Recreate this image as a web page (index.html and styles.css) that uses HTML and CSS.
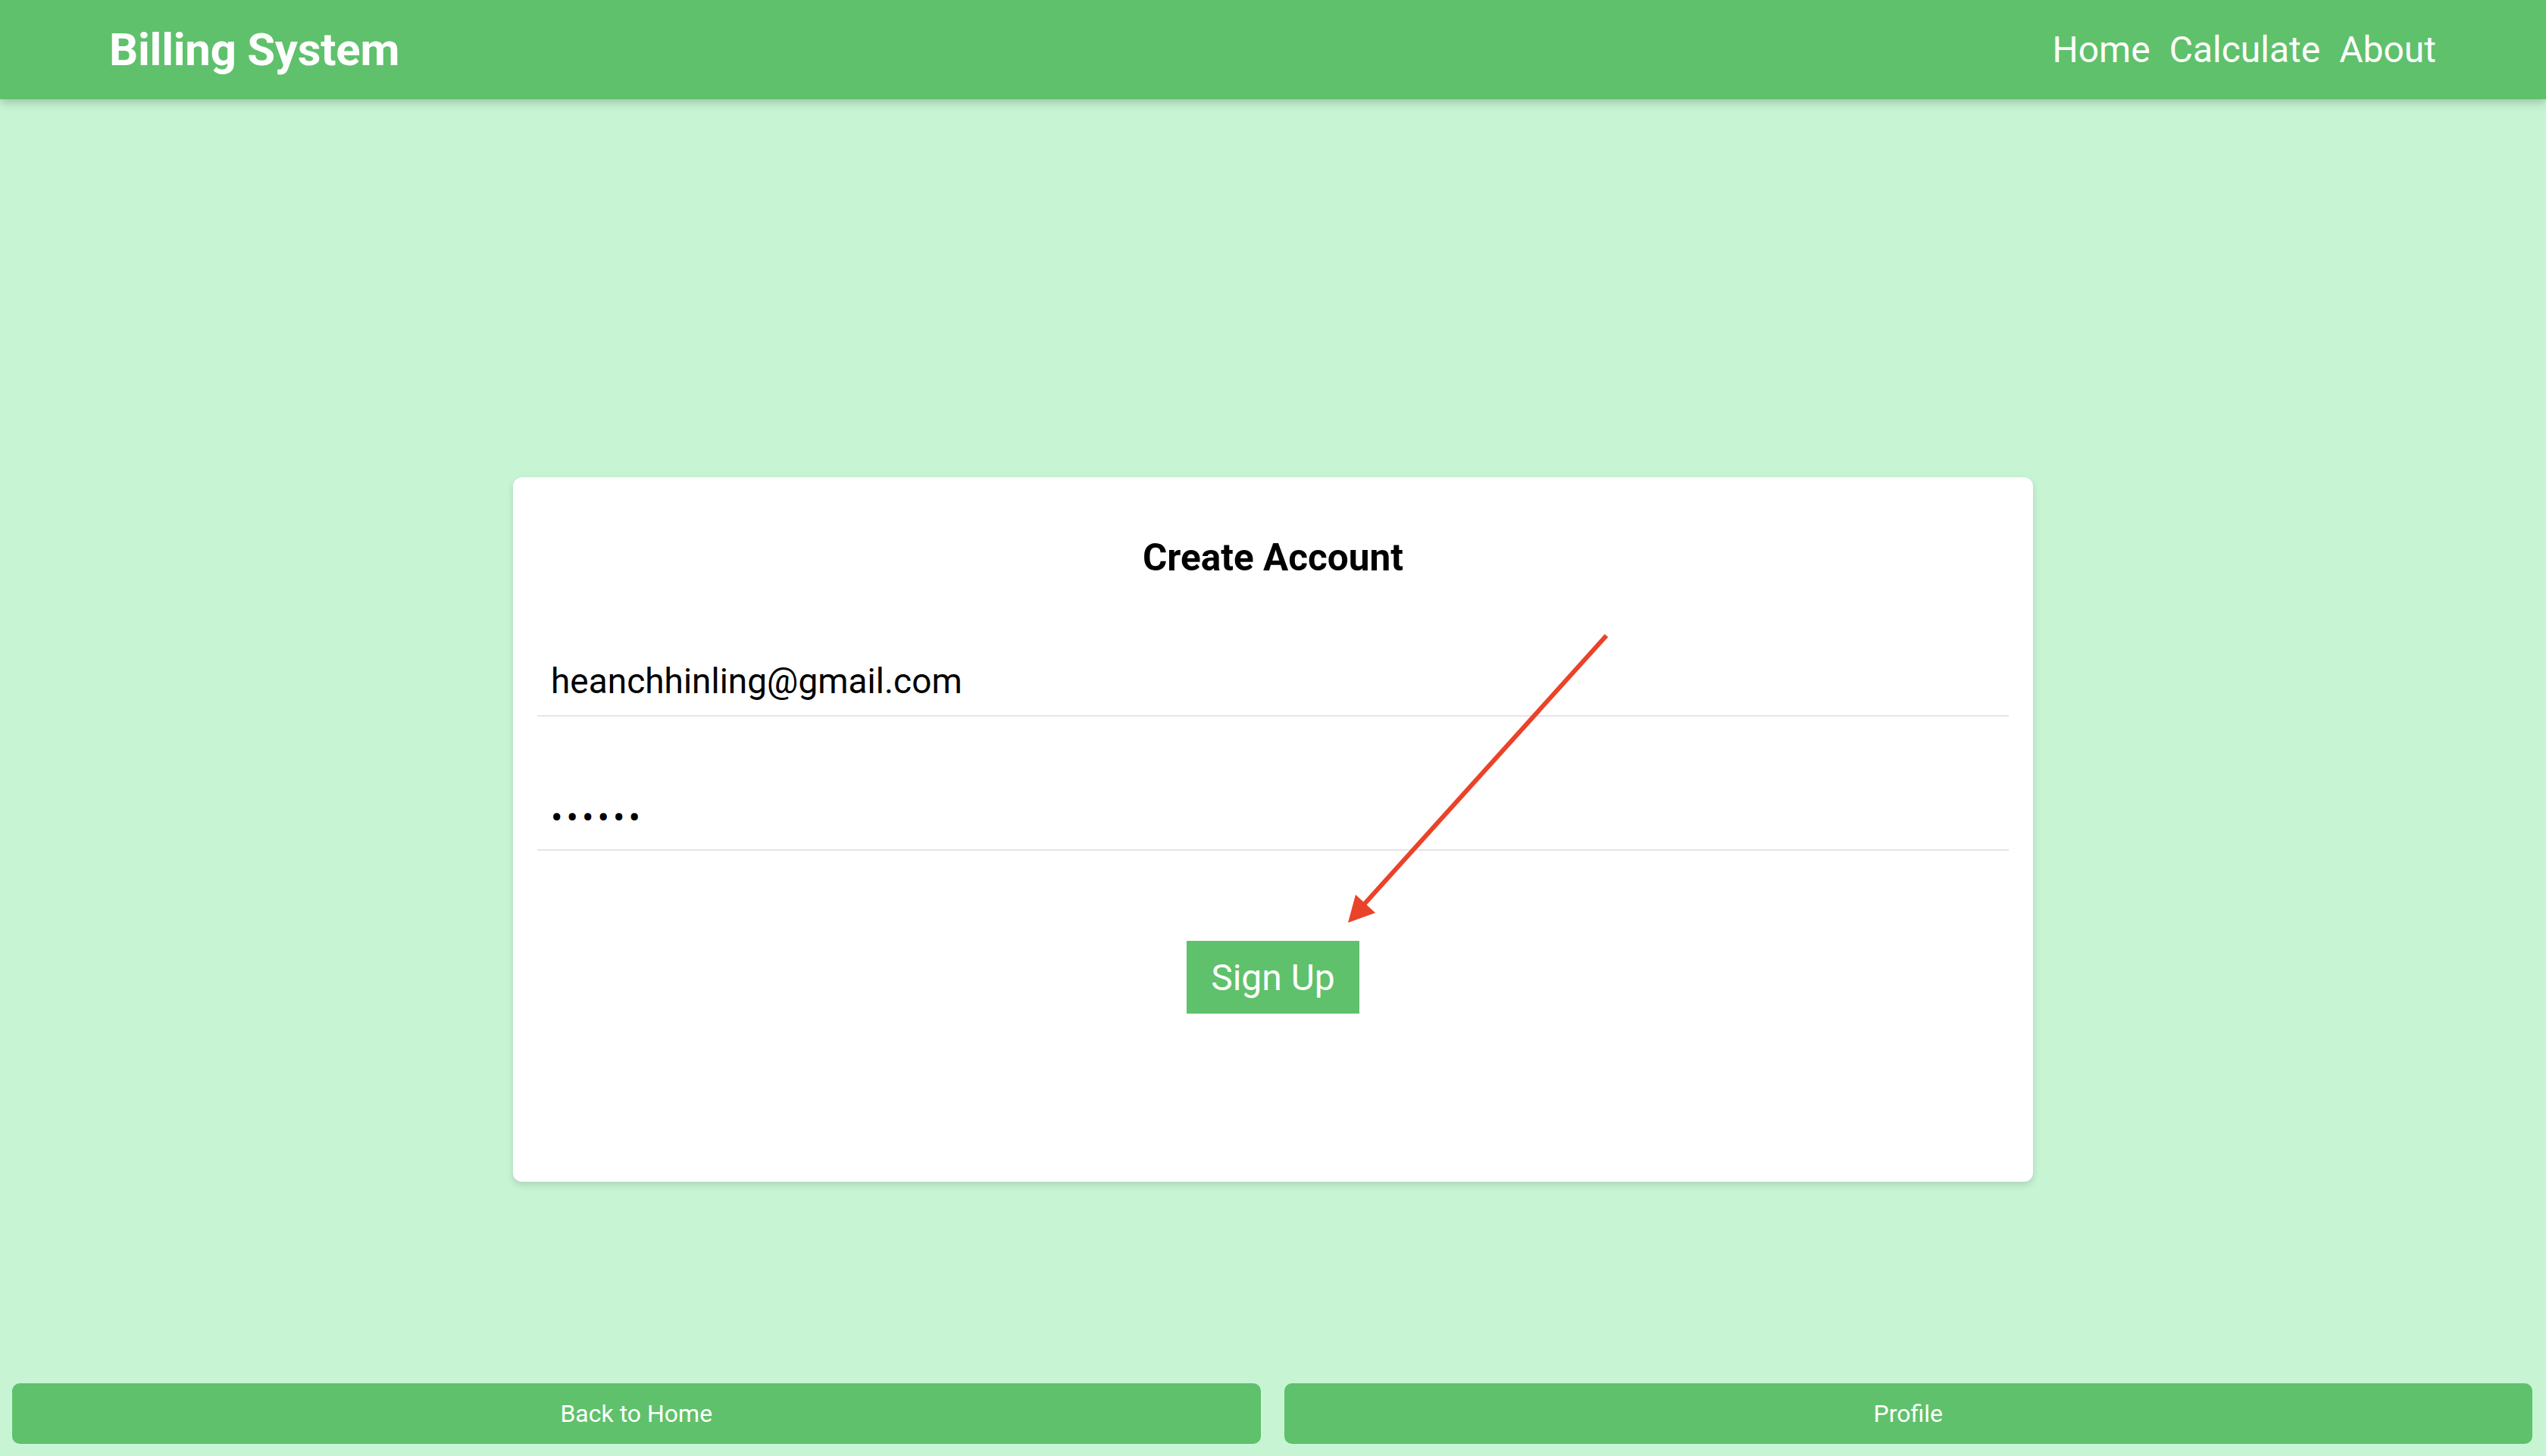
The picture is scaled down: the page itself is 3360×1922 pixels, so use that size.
FILE: index.html
```html
<!DOCTYPE html>
<html lang="en">
<head>
<meta charset="utf-8">
<title>Billing System</title>
<link rel="stylesheet" href="styles.css">
</head>
<body>
  <header class="topbar">
    <div class="brand">Billing System</div>
    <nav class="nav">
      <a class="nav-link" href="#">Home</a>
      <a class="nav-link" href="#">Calculate</a>
      <a class="nav-link" href="#">About</a>
    </nav>
  </header>

  <main class="main">
    <form class="card">
      <h2 class="card-title">Create Account</h2>
      <input class="field field-email" type="email" value="heanchhinling@gmail.com">
      <input class="field field-pass" type="password" value="123456">
      <button class="signup" type="button">Sign Up</button>
    </form>
  </main>

  <footer class="footer">
    <button class="foot-btn" type="button">Back to Home</button>
    <button class="foot-btn" type="button">Profile</button>
  </footer>

  <svg class="annotation" viewBox="0 0 3360 1922" width="3360" height="1922" aria-hidden="true">
    <line x1="2120" y1="839" x2="1800" y2="1194" stroke="#e9432a" stroke-width="6"/>
    <polygon points="1779,1218 1789,1181 1815,1205" fill="#e9432a"/>
  </svg>
</body>
</html>
```

FILE: styles.css
```css
* { box-sizing: border-box; }

html, body {
  margin: 0;
  padding: 0;
}

body {
  position: relative;
  min-height: 100vh;
  display: flex;
  flex-direction: column;
  background: #c7f5d4;
  font-family: Roboto, "Liberation Sans", Arial, sans-serif;
  color: #000;
}

.topbar {
  height: 131px;
  flex: 0 0 auto;
  display: flex;
  align-items: center;
  justify-content: space-between;
  padding: 0 145px 0 144px;
  background: #5fc16b;
  box-shadow: 0 4px 12px rgba(0, 0, 0, 0.22);
  position: relative;
  z-index: 1;
}

.brand {
  color: #fff;
  font-size: 60px;
  font-weight: 700;
  line-height: 1;
  letter-spacing: -0.3px;
}

.nav {
  display: flex;
  gap: 25px;
}

.nav-link {
  color: #fff;
  text-decoration: none;
  font-size: 48px;
  line-height: 1;
}

.main {
  flex: 1 1 auto;
  display: flex;
  justify-content: center;
  align-items: flex-start;
  padding-top: 499px;
}

.card {
  width: 2006px;
  height: 930px;
  padding: 78px 32px 0;
  background: #fff;
  border-radius: 12px;
  box-shadow: 0 4px 10px rgba(0, 0, 0, 0.14);
  display: flex;
  flex-direction: column;
  align-items: center;
}

.card-title {
  margin: 0 0 103px;
  font-size: 49.5px;
  line-height: 56px;
  font-weight: 700;
}

.field {
  display: block;
  width: 100%;
  height: 79px;
  padding: 0 18px 14px;
  border: none;
  border-bottom: 2px solid #e5e5ea;
  background: transparent;
  font-family: Roboto, "Liberation Sans", Arial, sans-serif;
  font-size: 46px;
  color: #000;
  outline: none;
}

.field-email {
  margin-bottom: 98px;
}

.field-pass {
  letter-spacing: 5px;
  padding-bottom: 8px;
}

.signup {
  margin-top: 119px;
  width: 228px;
  height: 96px;
  border: none;
  border-radius: 0;
  background: #5fc16b;
  color: #fff;
  font-family: Roboto, "Liberation Sans", Arial, sans-serif;
  font-size: 48px;
  padding: 0;
}

.footer {
  flex: 0 0 auto;
  display: grid;
  grid-template-columns: 1fr 1fr;
  gap: 31px;
  padding: 0 18px 16px 16px;
}

.foot-btn {
  height: 80px;
  border: none;
  border-radius: 10px;
  background: #5fc16b;
  color: #fff;
  font-family: Roboto, "Liberation Sans", Arial, sans-serif;
  font-size: 32px;
}

.annotation {
  position: absolute;
  top: 0;
  left: 0;
  pointer-events: none;
  z-index: 2;
}
```
